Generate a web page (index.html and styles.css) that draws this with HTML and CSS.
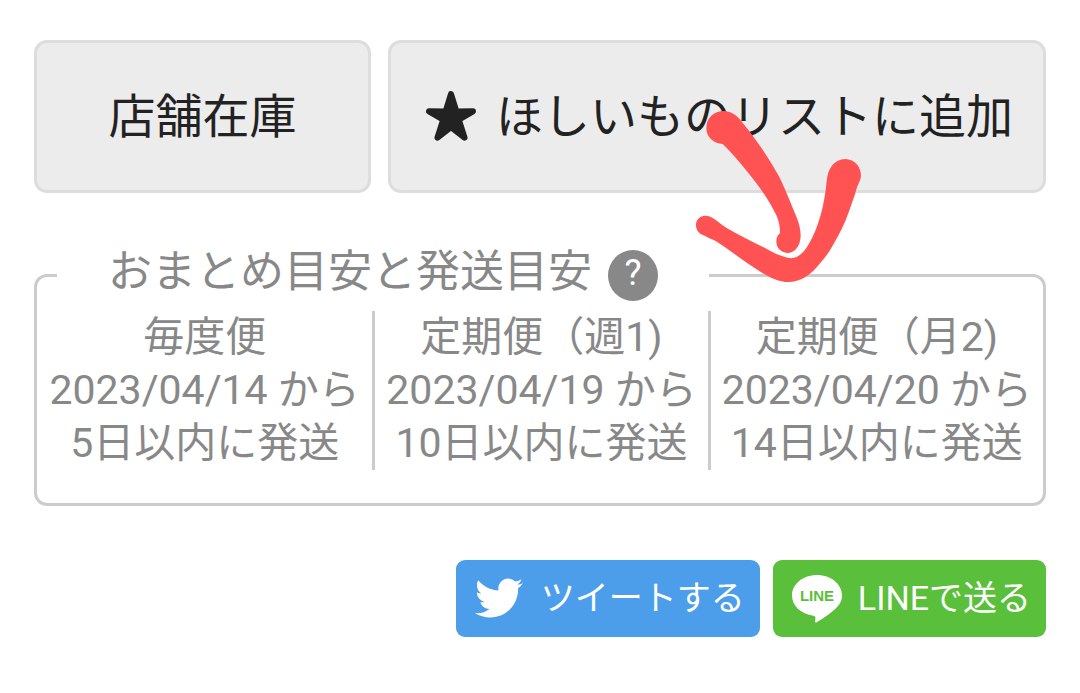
FILE: index.html
```
<!DOCTYPE html>
<html lang="ja">
<head>
<meta charset="utf-8">
<meta name="viewport" content="width=device-width, initial-scale=1">
<title>店舗在庫</title>
<link rel="stylesheet" href="styles.css">
</head>
<body>
<main class="page">
  <div class="actions">
    <button type="button" class="action">店舗在庫</button>
    <button type="button" class="action wishlist">
      <svg class="star" viewBox="0 0 148 148" aria-hidden="true"><path d="M74 9 90 61 139 60 97 85 114 138 74 107 34 138 51 85 9 60 58 61Z"/></svg>
      <span>ほしいものリストに追加</span>
    </button>
  </div>

  <fieldset class="shipping">
    <legend class="shipping-title">
      <span>おまとめ目安と発送目安</span>
      <button type="button" class="help">?</button>
    </legend>
    <div class="plans">
      <div class="plan">毎度便<br>2023/04/14 から<br>5日以内に発送</div>
      <div class="plan">定期便（週1)<br>2023/04/19 から<br>10日以内に発送</div>
      <div class="plan">定期便（月2)<br>2023/04/20 から<br>14日以内に発送</div>
    </div>
  </fieldset>

  <div class="share">
    <a class="share-link tweet" href="#">
      <svg class="bird" viewBox="0 0 24 24" aria-hidden="true"><path d="M23.953 4.57a10 10 0 01-2.825.775 4.958 4.958 0 002.163-2.723c-.951.555-2.005.959-3.127 1.184a4.92 4.92 0 00-8.384 4.482C7.69 8.095 4.067 6.13 1.64 3.162a4.822 4.822 0 00-.666 2.475c0 1.71.87 3.213 2.188 4.096a4.904 4.904 0 01-2.228-.616v.06a4.923 4.923 0 003.946 4.827 4.996 4.996 0 01-2.212.085 4.936 4.936 0 004.604 3.417 9.867 9.867 0 01-6.102 2.105c-.39 0-.779-.023-1.17-.067a13.995 13.995 0 007.557 2.209c9.053 0 13.998-7.496 13.998-13.985 0-.21 0-.42-.015-.63A9.935 9.935 0 0024 4.59z"/></svg>
      <span>ツイートする</span>
    </a>
    <a class="share-link line" href="#">
      <svg class="bubble" viewBox="0 0 50 48" aria-hidden="true"><path d="M25 0C11 0 0 9 0 20.500C0 31 9 39 21.500 40.800C23.500 41.200 23.600 42.500 23.300 44.500L23 46.500C23 47.500 23.600 47.800 24.600 47.200C31 43.500 41 37 46 31C49 27.500 50 24 50 20.500C50 9 39 0 25 0Z"/><text x="25" y="26" text-anchor="middle">LINE</text></svg>
      <span>LINEで送る</span>
    </a>
  </div>

  <svg class="arrow" viewBox="0 0 660 630" aria-hidden="true">
    <path d="M79 114C79 84 101 63 132 63C159 64 176 82 190 101C226 145 267 203 298 261C316 298 335 346 350 382C358 403 362 420 362 438C361 470 343 489 322 489C301 487 289 473 289 454C289 443 293 436 300 430C300 410 297 389 284 366C261 321 226 273 186 226C167 203 147 180 128 162C99 160 79 141 79 114Z"/>
    <path d="M48 404C48 389 60 377 76 377C87 377 96 382 104 388C116 396 129 408 144 416C182 439 230 460 270 482C292 494 314 503 334 505C359 503 375 482 386 463C415 416 434 343 440 273C443 236 463 207 496 207C524 208 543 229 543 258C542 271 535 281 532 289C523 322 511 353 497 391C483 424 467 452 450 481C437 501 424 515 410 532C389 557 360 576 325 576C298 576 270 563 246 548C201 521 160 488 112 456C100 448 87 445 74 437C59 432 48 423 48 404Z"/>
  </svg>
</main>
</body>
</html>
```
FILE: styles.css
```
* {
  box-sizing: border-box;
}

body {
  margin: 0;
  background: #fff;
  color: #222;
  font-family: Roboto, "Noto Sans CJK JP", sans-serif;
}

button {
  font: inherit;
  cursor: pointer;
}

.page {
  position: relative;
  padding: 40px 34px 56px;
}

.actions {
  display: grid;
  grid-template-columns: 337fr 658fr;
  gap: 17px;
}

.action {
  display: flex;
  align-items: center;
  justify-content: center;
  gap: 20px;
  padding: 40px 20px;
  border: 3px solid #ddd;
  border-radius: 13px;
  background: #ececec;
  color: #222;
  font-size: 47px;
  line-height: 67px;
  white-space: nowrap;
}

.wishlist {
  padding-left: 25px;
}

.star {
  width: 50px;
  height: 50px;
  margin-bottom: 2px;
  fill: #222;
  stroke: #222;
  stroke-width: 18px;
  stroke-linejoin: round;
}

.shipping {
  min-width: 0;
  margin: 47px 0 0;
  padding: 0 0 33px;
  border: 3px solid #ccc;
  border-radius: 13px;
  color: #888;
}

.shipping-title {
  display: flex;
  align-items: flex-start;
  gap: 16px;
  margin-left: 20px;
  padding: 10px 51px;
  font-size: 44px;
  line-height: 44px;
}

.help {
  width: 50px;
  height: 51px;
  padding: 0 0 4px;
  border: 0;
  border-radius: 50%;
  background: #888;
  color: #fff;
  font-size: 36px;
  line-height: 47px;
}

.plans {
  display: grid;
  grid-template-columns: repeat(3, 1fr);
}

.plan {
  font-size: 41px;
  line-height: 53px;
  text-align: center;
  white-space: nowrap;
}

.plan + .plan {
  border-left: 3px solid #ccc;
}

.share {
  display: flex;
  justify-content: flex-end;
  gap: 13px;
  margin-top: 54px;
}

.share-link {
  display: flex;
  align-items: center;
  gap: 16px;
  height: 77px;
  padding: 0 15px 2px 19px;
  border-radius: 9px;
  color: #fff;
  font-size: 34px;
  line-height: 48px;
  text-decoration: none;
  white-space: nowrap;
}

.tweet {
  gap: 18px;
  background: #4c9eeb;
}

.line {
  background: #5abf3a;
}

.bird {
  width: 48px;
  height: 48px;
  fill: #fff;
}

.bubble {
  width: 50px;
  height: 48px;
  margin-top: 3px;
  fill: #fff;
}

.bubble text {
  fill: #5abf3a;
  font-family: "Liberation Sans", sans-serif;
  font-size: 15px;
  font-weight: 700;
}

.arrow {
  position: absolute;
  top: 90px;
  right: 180px;
  width: 220px;
  height: 210px;
  fill: #ff5353;
  pointer-events: none;
}
```
